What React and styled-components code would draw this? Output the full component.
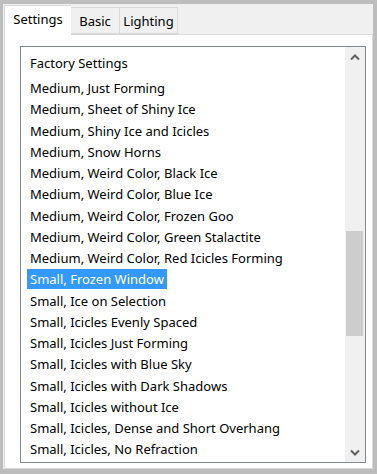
import React from 'react'
import styled, { createGlobalStyle } from 'styled-components'

const GlobalStyle = createGlobalStyle`
  html, body {
    margin: 0;
    padding: 0;
    background: #bcbcbc;
  }
  * {
    box-sizing: border-box;
  }
`

const Frame = styled.div`
  width: 377px;
  height: 474px;
  background: #f0f0f0;
  border-style: solid;
  border-color: #bdbdbd;
  border-width: 4px 4px 5px 3px;
  padding: 0 0 0 1px;
  display: flex;
  flex-direction: column;
  font-family: "Noto Sans", "Open Sans", sans-serif;
  font-size: 13px;
  color: #000;
`

const TabStrip = styled.div`
  display: flex;
  align-items: flex-end;
  height: 30px;
  position: relative;
  z-index: 1;
`

const Tab = styled.div`
  display: flex;
  align-items: center;
  justify-content: center;
  width: ${p => p.$w}px;
  height: ${p => (p.$active ? 30 : 27)}px;
  padding-bottom: ${p => (p.$active ? 3 : 0)}px;
  margin-bottom: ${p => (p.$active ? -1 : 0)}px;
  background: ${p => (p.$active ? '#fff' : '#f0f0f0')};
  border: 1px solid #d9d9d9;
  border-bottom: ${p => (p.$active ? 'none' : '1px solid #d9d9d9')};
  border-left: ${p => (p.$first || p.$active ? '1px solid #d9d9d9' : 'none')};
  border-right: ${p => (p.$active ? 'none' : '1px solid #d9d9d9')};
`

const Page = styled.div`
  flex: 1;
  background: #fff;
  border: 1px solid #d9d9d9;
  padding: 11px 6px 5px 15px;
  display: flex;
`

const ListBox = styled.div`
  flex: 1;
  border: 1px solid #828790;
  display: flex;
  background: #fff;
  overflow: hidden;
`

const Items = styled.div`
  flex: 1;
  padding: 6px 0 0 6px;
  overflow: hidden;
`

const Item = styled.div`
  height: 21.24px;
  line-height: 21.24px;
  white-space: nowrap;
  margin-bottom: ${p => (p.$header ? 4 : 0)}px;
`

const Label = styled.span`
  display: inline-block;
  padding: 0 3px;
  height: 20px;
  line-height: 20px;
  background: ${p => (p.$selected ? '#3399ff' : 'transparent')};
  color: ${p => (p.$selected ? '#fff' : '#000')};
`

const ScrollBar = styled.div`
  width: 20px;
  background: #f0f0f0;
  display: flex;
  flex-direction: column;
`

const ArrowButton = styled.div`
  height: 20px;
  display: flex;
  align-items: center;
  justify-content: center;
`

const Track = styled.div`
  flex: 1;
  padding: 164px 2px 106px 1px;
  display: flex;
`

const Thumb = styled.div`
  flex: 1;
  background: #cdcdcd;
`

const items = [
  'Medium, Just Forming',
  'Medium, Sheet of Shiny Ice',
  'Medium, Shiny Ice and Icicles',
  'Medium, Snow Horns',
  'Medium, Weird Color, Black Ice',
  'Medium, Weird Color, Blue Ice',
  'Medium, Weird Color, Frozen Goo',
  'Medium, Weird Color, Green Stalactite',
  'Medium, Weird Color, Red Icicles Forming',
  'Small, Frozen Window',
  'Small, Ice on Selection',
  'Small, Icicles Evenly Spaced',
  'Small, Icicles Just Forming',
  'Small, Icicles with Blue Sky',
  'Small, Icicles with Dark Shadows',
  'Small, Icicles without Ice',
  'Small, Icicles, Dense and Short Overhang',
  'Small, Icicles, No Refraction'
]

function Chevron ({ down }) {
  return (
    <svg width='10' height='7' viewBox='0 0 10 7'>
      <polyline
        points={down ? '1,1.5 5,5.5 9,1.5' : '1,5.5 5,1.5 9,5.5'}
        fill='none'
        stroke='#606060'
        strokeWidth='2'
      />
    </svg>
  )
}

export default function App () {
  return (
    <>
      <GlobalStyle />
      <Frame>
        <TabStrip>
          <Tab $active $first $w={67}>Settings</Tab>
          <Tab $w={49}>Basic</Tab>
          <Tab $w={58}>Lighting</Tab>
        </TabStrip>
        <Page>
          <ListBox>
            <Items>
              <Item $header><Label>Factory Settings</Label></Item>
              {items.map(name => (
                <Item key={name}>
                  <Label $selected={name === 'Small, Frozen Window'}>{name}</Label>
                </Item>
              ))}
            </Items>
            <ScrollBar>
              <ArrowButton><Chevron /></ArrowButton>
              <Track><Thumb /></Track>
              <ArrowButton><Chevron down /></ArrowButton>
            </ScrollBar>
          </ListBox>
        </Page>
      </Frame>
    </>
  )
}
